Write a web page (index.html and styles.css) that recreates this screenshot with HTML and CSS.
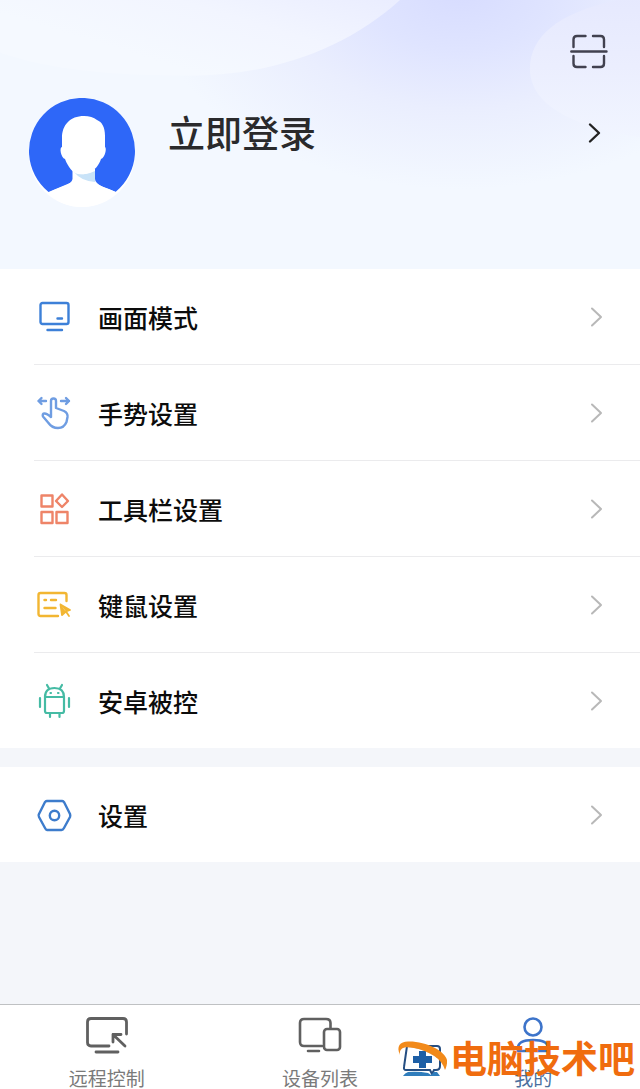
FILE: index.html
```html
<!DOCTYPE html>
<html lang="zh-CN">
<head>
  <meta charset="UTF-8" />
  <meta name="viewport" content="width=device-width, initial-scale=1" />
  <title>我的</title>
  <link rel="stylesheet" href="styles.css">
</head>
<body>
  <header class="profile">
    <svg class="profile-bg" viewBox="0 0 640 270" preserveAspectRatio="none" aria-hidden="true">
      <defs>
        <radialGradient id="lilac" gradientUnits="userSpaceOnUse" cx="0" cy="0" r="1" gradientTransform="translate(460 -10) scale(310 200)">
          <stop offset="0" stop-color="#d7dcff" />
          <stop offset="0.3" stop-color="#dfe4ff" />
          <stop offset="0.6" stop-color="#eaeefe" />
          <stop offset="1" stop-color="#f3f8ff" />
        </radialGradient>
        <linearGradient id="left" x1="1" y1="0" x2="0.2" y2="0.5">
          <stop offset="0" stop-color="#eaedff" />
          <stop offset="0.5" stop-color="#f2f5ff" />
          <stop offset="1" stop-color="#f5f9ff" />
        </linearGradient>
        <linearGradient id="right" x1="0" y1="0" x2="0" y2="1">
          <stop offset="0" stop-color="#e6e9fe" />
          <stop offset="0.5" stop-color="#ebeefe" />
          <stop offset="1" stop-color="#f1f5ff" />
        </linearGradient>
      </defs>
      <rect width="640" height="270" fill="#f3f8ff" />
      <rect width="640" height="270" fill="url(#lilac)" />
      <path d="M0 0H400C345 50 270 76 190 76C110 76 50 70 0 53Z" fill="url(#left)" />
      <path d="M640 -4C560 8 528 36 530 72C532 100 560 125 640 138Z" fill="url(#right)" />
    </svg>

    <button class="scan" type="button" aria-label="扫一扫">
      <svg width="38" height="36" viewBox="0 0 38 36" fill="none" stroke="#41414f" stroke-width="2.4" stroke-linecap="round">
        <path d="M3.5 13V5.5Q3.5 2 7 2H15.500M23 2H30.500Q34 2 34 5.500V13M3.500 22V29.500Q3.500 33 7 33H15.500M23 33H30.500Q34 33 34 29.500V22M1.300 17.500H36.500" />
      </svg>
    </button>

    <a class="login" href="#login">
      <svg class="avatar" width="108" height="110" viewBox="0 0 108 110" aria-hidden="true">
        <circle cx="54" cy="56" r="53" fill="#fff" />
        <path d="M20.500 94A53 53 0 1 1 87.500 94L54 80Z" fill="#2e67f8" />
        <path d="M44.500 71V81Q44 85 36 88Q25 92 20 95Q34 109 54 109T88 94Q82 91 75 89Q67 85 67 81V71Z" fill="#fff" />
        <path d="M46 74Q56 79 67 73V84Q53 83 46 74Z" fill="#c9e3f8" />
        <path d="M56 18C42 18 34 27 34 40L34 49C31 49 33 60 37 61C40 69 45 75 50 76Q56 77 61 75C67 72 71 67 73 61C77 60 79 50 77 49V38C77 29 74 24 69 22Q64 18 56 18Z" fill="#fff" />
      </svg>
      <span class="login-text">立即登录</span>
      <svg class="login-arrow" width="14" height="22" viewBox="0 0 14 22" fill="none" stroke="#222" stroke-width="2.4" stroke-linecap="round" stroke-linejoin="round" aria-hidden="true">
        <path d="M2 2.500L11 11L2 19.500" />
      </svg>
    </a>
  </header>

  <main>
    <nav class="menu">
      <a class="row" href="#display">
        <svg class="icon" width="36" height="36" viewBox="0 0 36 36" fill="none" stroke="#3d80d8" stroke-width="2.400" stroke-linecap="round" stroke-linejoin="round" aria-hidden="true">
          <rect x="4.500" y="4" width="28" height="21" rx="2" />
          <path d="M21.500 19.500H26M11.500 31H26" />
        </svg>
        <span class="label">画面模式</span>
        <svg class="arrow" width="14" height="22" viewBox="0 0 14 22" aria-hidden="true"><path d="M2 2.500L11 11L2 19.500" /></svg>
      </a>
      <a class="row" href="#gesture">
        <svg class="icon" width="36" height="36" viewBox="0 0 36 36" fill="none" stroke="#6f9de2" stroke-width="2.400" stroke-linecap="round" stroke-linejoin="round" aria-hidden="true">
          <path d="M10 6H2.500M5.500 3L2.500 6L5.500 9M25 6H33M30 3L33 6L30 9" />
          <path d="M15 22V6Q15 3.500 17.500 3.500T20 6V13L28 16Q32 18 31.500 22L30.500 27Q28 33 22 33Q16 33 12.500 28L7 21.500Q6 18.500 8.500 18.500Q11 18.500 15 22Z" />
        </svg>
        <span class="label">手势设置</span>
        <svg class="arrow" width="14" height="22" viewBox="0 0 14 22" aria-hidden="true"><path d="M2 2.500L11 11L2 19.500" /></svg>
      </a>
      <a class="row" href="#toolbar">
        <svg class="icon" width="36" height="36" viewBox="0 0 36 36" fill="none" stroke="#ee8468" stroke-width="2.400" stroke-linejoin="round" aria-hidden="true">
          <rect x="5.500" y="4.500" width="11" height="11" />
          <rect x="5.500" y="21" width="11" height="11" />
          <rect x="20.500" y="21" width="11" height="11" />
          <path d="M26 3.500L32 10L26 16L20 10Z" />
        </svg>
        <span class="label">工具栏设置</span>
        <svg class="arrow" width="14" height="22" viewBox="0 0 14 22" aria-hidden="true"><path d="M2 2.500L11 11L2 19.500" /></svg>
      </a>
      <a class="row" href="#keyboard">
        <svg class="icon" width="36" height="36" viewBox="0 0 36 36" fill="none" stroke="#f2b632" stroke-width="2.400" stroke-linecap="round" stroke-linejoin="round" aria-hidden="true">
          <path d="M22 29H4.500Q2.500 29 2.500 27V8Q2.500 6 4.500 6H28.500Q30.500 6 30.500 8V14M8.500 13H10M15 13H20M8.500 21H19.500" />
          <path d="M24.500 17.500L34 23L30 24.500L33 29M24.500 17.500L26 28L30 24.500" fill="#f2b632" stroke-width="1.800" />
        </svg>
        <span class="label">键鼠设置</span>
        <svg class="arrow" width="14" height="22" viewBox="0 0 14 22" aria-hidden="true"><path d="M2 2.500L11 11L2 19.500" /></svg>
      </a>
      <a class="row" href="#android">
        <svg class="icon" width="36" height="36" viewBox="0 0 36 36" fill="none" stroke="#45bba4" stroke-width="2.200" stroke-linecap="round" stroke-linejoin="round" aria-hidden="true">
          <path d="M9 14H28V28Q28 30 26 30H11Q9 30 9 28V14Q9 5 18.500 5T28 14M13 5.500L11 2M24 5.500L26 2M4 15V24M33 15V24M14 31V34M23.500 31V34M14.500 10H15M22 10H22.500" />
        </svg>
        <span class="label">安卓被控</span>
        <svg class="arrow" width="14" height="22" viewBox="0 0 14 22" aria-hidden="true"><path d="M2 2.500L11 11L2 19.500" /></svg>
      </a>
    </nav>

    <nav class="menu">
      <a class="row" href="#settings">
        <svg class="icon" width="36" height="36" viewBox="0 0 36 36" fill="none" stroke="#3d7ccc" stroke-width="2.400" stroke-linejoin="round" aria-hidden="true">
          <path d="M11 4H26Q27 4 28 5L34 17Q34.500 18.500 34 20L28 31Q27 33 25.500 33H11Q10 33 9 31L3 20Q2 18.500 3 17L9 5Q10 4 11 4Z" />
          <circle cx="18.500" cy="18.500" r="4.700" />
        </svg>
        <span class="label">设置</span>
        <svg class="arrow" width="14" height="22" viewBox="0 0 14 22" aria-hidden="true"><path d="M2 2.500L11 11L2 19.500" /></svg>
      </a>
    </nav>
  </main>

  <footer class="tabbar">
    <a class="tab" href="#remote">
      <svg width="44" height="40" viewBox="0 0 44 40" fill="none" stroke="#606060" stroke-width="2.800" stroke-linecap="round" stroke-linejoin="round" aria-hidden="true">
        <path d="M24 31H6Q2.500 31 2.500 27.500V7Q2.500 3.500 6 3.500H38Q41.500 3.500 41.500 7V19M11 37H33M40 31L28 19.500M28 27V19.500H36" />
      </svg>
      <span>远程控制</span>
    </a>
    <a class="tab" href="#devices">
      <svg width="44" height="40" viewBox="0 0 44 40" fill="none" stroke="#606060" stroke-width="2.600" stroke-linecap="round" stroke-linejoin="round" aria-hidden="true">
        <path d="M24 31H6Q2 31 2 27V8Q2 4 6 4H28Q32.500 4 32.500 8V13M10 36H21" />
        <rect x="26" y="14" width="16" height="21" rx="3" />
      </svg>
      <span>设备列表</span>
    </a>
    <a class="tab active" href="#mine">
      <svg width="44" height="40" viewBox="0 0 44 40" fill="none" stroke="#3d74ca" stroke-width="2.600" stroke-linecap="round" stroke-linejoin="round" aria-hidden="true">
        <circle cx="22" cy="12" r="8.500" />
        <path d="M7 36V33Q7 25 22 25T37 33V36Z" />
      </svg>
      <span>我的</span>
    </a>

    <div class="watermark">
      <svg width="52" height="40" viewBox="0 0 52 40" aria-hidden="true">
        <path d="M11 9H41Q44 9 44 12V29Q44 33 40 33H38L36 37L34 33H10Q7.500 33 8 30Z" fill="#fff" stroke="#254e82" stroke-width="2" />
        <path d="M11 10C22 11 34 15 41 21L40 14L28 8Z" fill="#b9bcc0" />
        <path d="M23 14H30V19H36V26H30V31H23V26H17V19H23Z" fill="#1d5fa6" />
        <path d="M12 35Q22 34 32 36L35 38L38 35H41L44 39H7Q9 36 12 35Z" fill="#2f7dbc" />
        <path d="M4 18C0 9 4 5 12 4.500C30 4 49 14 51 23C51.500 27 50 31 49 33C46 22 34 14 18 11C8 9 3 11 4 18Z" fill="#f28a1a" />
      </svg>
      <span>电脑技术吧</span>
    </div>
  </footer>
</body>
</html>
```
FILE: styles.css
```css
* {
  box-sizing: border-box;
}

body {
  margin: 0;
  min-height: 100vh;
  display: flex;
  flex-direction: column;
  background: #f4f6fa;
  color: #0c0c0c;
  font-family: "Noto Sans CJK SC", sans-serif;
}

a {
  color: inherit;
  text-decoration: none;
}

svg {
  display: block;
  flex: none;
}

.profile {
  position: relative;
  display: flex;
  flex-direction: column;
  padding: 34px 32px 61px 28px;
}

.profile-bg {
  position: absolute;
  inset: 0;
  width: 100%;
  height: 100%;
  z-index: -1;
}

.scan {
  align-self: flex-end;
  padding: 0;
  border: 0;
  background: none;
  cursor: pointer;
}

.login {
  display: flex;
  align-items: flex-start;
  margin-top: 28px;
}

.login-text {
  flex: 1;
  margin-left: 32px;
  padding-top: 6px;
  font-size: 37px;
  font-weight: 500;
  line-height: 56px;
  color: #2a2a2c;
}

.login-arrow {
  margin-top: 24px;
  margin-right: 6px;
}

.menu {
  background: #fff;
}

.menu + .menu {
  margin-top: 19px;
}

.row {
  display: flex;
  align-items: center;
  height: 95px;
  margin-left: 34px;
  padding-right: 36px;
}

.row:not(:last-child) {
  height: 96px;
  border-bottom: 1px solid #ebebed;
}

.icon {
  margin-left: 2px;
}

.label {
  flex: 1;
  margin-left: 26px;
  font-size: 25px;
  font-weight: 500;
}

.arrow {
  fill: none;
  stroke: #b8b8b8;
  stroke-width: 2;
  stroke-linecap: round;
  stroke-linejoin: round;
}

.tabbar {
  position: relative;
  display: flex;
  margin-top: auto;
  border-top: 1px solid #bfc1c3;
  background: #fff;
}

.tab {
  flex: 1;
  display: flex;
  flex-direction: column;
  align-items: center;
  gap: 12px;
  padding-top: 10px;
  color: #7a7a7a;
  font-size: 19px;
  line-height: 22px;
}

.tab.active {
  color: #4b6f9e;
}

.watermark {
  position: absolute;
  right: 5px;
  bottom: 5px;
  display: flex;
  align-items: center;
  gap: 2px;
  color: #f06c0e;
  font-size: 37px;
  font-weight: 700;
  line-height: 54px;
}
```
